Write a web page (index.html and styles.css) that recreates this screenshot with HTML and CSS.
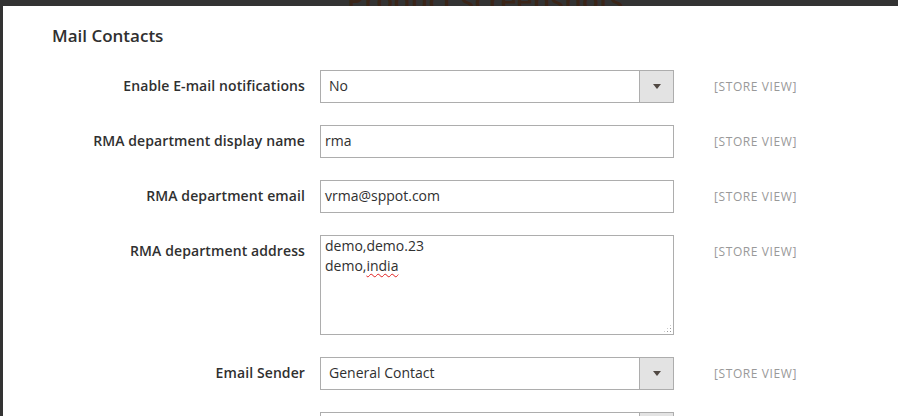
FILE: index.html
```html
<!DOCTYPE html>
<html lang="en">
<head>
    <meta charset="utf-8"/>
    <title>Mail Contacts</title>
    <link rel="stylesheet" href="styles.css">
</head>
<body>
<div class="page">
    <div class="backdrop_title"><span>Product screenshots</span></div>
    <div class="modal">
        <h3 class="section_title">Mail Contacts</h3>

        <div class="field">
            <label class="field_label">Enable E-mail notifications</label>
            <div class="control select">
                <span class="select_value">No</span>
                <span class="select_button"><span class="arrow"></span></span>
            </div>
            <span class="scope">[STORE VIEW]</span>
        </div>

        <div class="field">
            <label class="field_label">RMA department display name</label>
            <div class="control text">rma</div>
            <span class="scope">[STORE VIEW]</span>
        </div>

        <div class="field">
            <label class="field_label">RMA department email</label>
            <div class="control text">vrma@sppot.com</div>
            <span class="scope">[STORE VIEW]</span>
        </div>

        <div class="field">
            <label class="field_label">RMA department address</label>
            <div class="control textarea">
                demo,demo.23<br/>
                demo,<span class="misspelled">india</span>
                <span class="grip"></span>
            </div>
            <span class="scope">[STORE VIEW]</span>
        </div>

        <div class="field">
            <label class="field_label">Email Sender</label>
            <div class="control select">
                <span class="select_value">General Contact</span>
                <span class="select_button"><span class="arrow"></span></span>
            </div>
            <span class="scope">[STORE VIEW]</span>
        </div>

        <div class="field">
            <label class="field_label"></label>
            <div class="control select">
                <span class="select_value"></span>
                <span class="select_button"><span class="arrow"></span></span>
            </div>
        </div>
    </div>
</div>
</body>
</html>
```

FILE: styles.css
```css
*{
    padding: 0;
    margin: 0;
    box-sizing: border-box;
}

html, body{
    height: 100%;
    overflow: hidden;
}

body{
    background-color: #333333;
    font-family: "Open Sans", "Liberation Sans", sans-serif;
    color: #303030;
}

.page{
    display: flex;
    flex-direction: column;
    height: 100%;
}

/* page behind the overlay, only its top edge shows */
.backdrop_title{
    height: 6px;
    overflow: hidden;
    padding-left: 347px;
    flex-shrink: 0;
}

.backdrop_title span{
    display: block;
    margin-top: -15px;
    font-size: 28px;
    line-height: 30px;
    color: #3b2518;
    font-weight: 600;
}

.modal{
    flex: 1;
    margin-left: 3px;
    background-color: #ffffff;
    padding: 18px 0 0 49px;
}

.section_title{
    font-size: 17px;
    font-weight: 600;
    line-height: 23px;
    margin-bottom: 23px;
}

.field{
    display: flex;
    align-items: flex-start;
    margin-bottom: 22px;
}

.field_label{
    width: 253px;
    text-align: right;
    font-size: 14px;
    font-weight: 600;
    letter-spacing: 0.1px;
    line-height: 19px;
    padding-top: 6px;
    flex-shrink: 0;
}

.control{
    width: 354px;
    margin-left: 15px;
    border: 1px solid #adadad;
    background-color: #ffffff;
    font-size: 14px;
    line-height: 19px;
    flex-shrink: 0;
}

.text{
    height: 33px;
    padding: 5px 4px;
}

.select{
    height: 33px;
    display: flex;
}

.select_value{
    flex: 1;
    padding: 5px 8px;
}

.select_button{
    width: 34px;
    border-left: 1px solid #adadad;
    background-color: #e3e3e3;
    display: flex;
    align-items: center;
    justify-content: center;
}

.arrow{
    width: 0;
    height: 0;
    border-left: 4px solid transparent;
    border-right: 4px solid transparent;
    border-top: 5px solid #514943;
}

.textarea{
    height: 100px;
    padding: 0 4px;
    line-height: 20px;
    position: relative;
}

.misspelled{
    text-decoration: underline wavy #e02020;
    text-decoration-thickness: 1px;
    text-underline-offset: 2px;
}

.grip{
    position: absolute;
    right: 1px;
    bottom: 1px;
    width: 9px;
    height: 9px;
    background-image: radial-gradient(circle, #9a9a9a 0.7px, transparent 0.8px);
    background-size: 3px 3px;
    clip-path: polygon(100% 0, 100% 100%, 0 100%);
}

.scope{
    margin-left: 40px;
    font-size: 12px;
    line-height: 19px;
    padding-top: 7px;
    color: #999999;
    letter-spacing: 0.6px;
}
```
